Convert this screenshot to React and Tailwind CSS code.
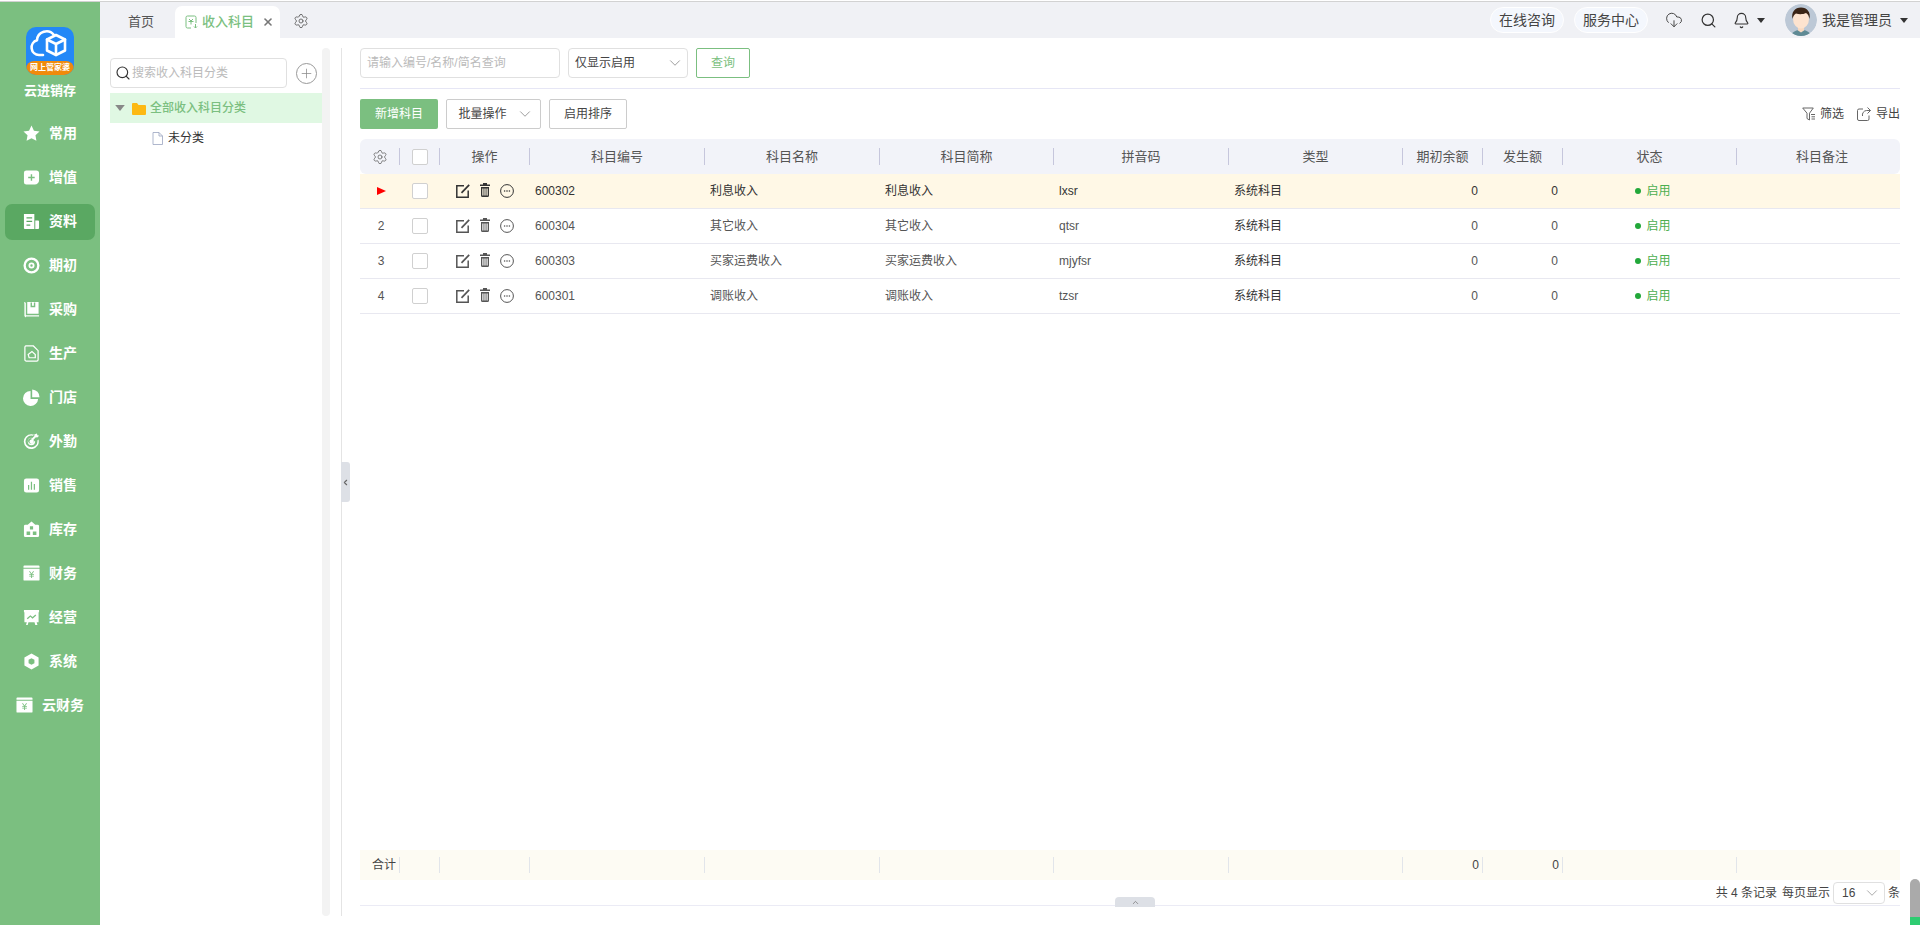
import { Settings, Search, CloudDownload, Bell, ChevronDown, ChevronUp, ChevronLeft, X, Plus } from "lucide-react";

const FONT = "font-['Liberation_Sans','Noto_Sans_CJK_SC',sans-serif]";

const Ico = ({ children, className = "", view = "0 0 18 18" }) => (
  <svg viewBox={view} className={className} fill="currentColor">
    {children}
  </svg>
);

const navIcons = {
  star: (
    <path d="M9 .6l2.600 5.400 5.900.8-4.300 4.100 1 5.900L9 14l-5.200 2.800 1-5.900L.5 6.800l5.900-.8z" />
  ),
  plus: (
    <path
      fillRule="evenodd"
      d="M3.500 1.500H14a3 3 0 0 1 3 3v7.500a4.500 4.500 0 0 1-4.500 4.500H3.500a2.500 2.500 0 0 1-2.500-2.500V4a2.500 2.500 0 0 1 2.500-2.500zM8.200 5.500v2.700H5.500v1.500h2.700v2.700h1.500V9.700h2.700V8.200H9.700V5.500z"
    />
  ),
  doc: (
    <path
      fillRule="evenodd"
      d="M1 1h11v16H2a1 1 0 0 1-1-1zM3.700 4.500v1.300h6V4.500zM3.700 8.300v1.300h6V8.300zM3.700 12.100v1.300h4v-1.300zM13 8h3a1 1 0 0 1 1 1v7a1 1 0 0 1-1 1h-3z"
    />
  ),
  disc: (
    <path
      fillRule="evenodd"
      d="M9 .5a8.500 8.500 0 1 1 0 17 8.500 8.500 0 0 1 0-17zM9 3a6 6 0 1 0 0 12A6 6 0 0 0 9 3zM9 5.800a3.200 3.200 0 1 1 0 6.400 3.200 3.200 0 0 1 0-6.400zM9 7.700a1.300 1.300 0 1 0 0 2.600 1.300 1.300 0 0 0 0-2.600z"
    />
  ),
  book: (
    <g>
      <path d="M1 1l2 .8v13.200h14v1.500H3.200L3 17.500l-1.200-1-.3-.5V3z" />
      <path fillRule="evenodd" d="M4.500 1h12v12.500h-12zM8 1.500v5h5v-5h-1.500v3.500h-2V1.500z" />
    </g>
  ),
  house: (
    <g fill="none" stroke="currentColor" strokeWidth="1.300">
      <path d="M3 1h8l5 5v9.500a1.500 1.500 0 0 1-1.500 1.500h-11A1.500 1.500 0 0 1 2 15.500v-13A1.500 1.500 0 0 1 3 1z" />
      <path d="M5.500 10l4-3 3.500 3v3.500H6.500z" />
    </g>
  ),
  pie: (
    <>
      <path d="M8 2a8 8 0 1 0 8 8.500H8z" />
      <path d="M9.700 .5a8 8 0 0 1 7.800 8.200H9.700z" />
    </>
  ),
  target: (
    <path
      fillRule="evenodd"
      d="M14.800 .5l.4 1.900 1.900.4-2 2-1.500-.2-2.500 2.500a3 3 0 1 1-1.500-1.500l2.500-2.500-.2-1.500zM9 1.200c.9 0 1.800.2 2.600.5l-1 1.100A6.300 6.300 0 1 0 15.200 8l1.200-1a7.900 7.900 0 1 1-7.400-5.800zM9 5.100a3.900 3.900 0 0 0-.1 7.800 3.900 3.900 0 0 0 3.900-3.900c0-.3 0-.5-.1-.8l-1.500 1.300v-.1A2.200 2.200 0 1 1 9 6.800z"
    />
  ),
  bars: (
    <path
      fillRule="evenodd"
      d="M3.500 1.500h11a2.500 2.500 0 0 1 2.500 2.500v10a2.500 2.500 0 0 1-2.500 2.500h-11A2.500 2.500 0 0 1 1 14V4a2.500 2.500 0 0 1 2.500-2.500zM8.300 5v8.500h1.300V5zM5.300 8.500v5h1.300v-5zM11.400 7.500v6h1.300v-6z"
    />
  ),
  store: (
    <path
      fillRule="evenodd"
      d="M9 .5l4 3.500h2.500a1.500 1.500 0 0 1 1.500 1.500v10a1.500 1.500 0 0 1-1.500 1.500h-13A1.500 1.500 0 0 1 1 15.500v-10A1.500 1.500 0 0 1 2.500 4H5zM7.300 5.500v3.600h3.400V5.500zM3.800 11v3.700h3.800V11zM10.400 11v3.700h3.800V11z"
    />
  ),
  yen: (
    <>
      <path d="M.5 1.500a1 1 0 0 1 1-1h15a1 1 0 0 1 1 1V3H.5z" />
      <path
        fillRule="evenodd"
        d="M.5 4h17v11.500a1 1 0 0 1-1 1h-15a1 1 0 0 1-1-1zM6.300 6.500l2.100 3H6.600v.9h2v1h-2v.9h2v1.500h1v-1.500h2v-.9h-2v-1h2v-.9H9.700l2.100-3h-1.100L9 9 7.400 6.500z"
      />
    </>
  ),
  board: (
    <path
      fillRule="evenodd"
      d="M1 1h16v2.500h-.5V14h-2l.8 3H13l-.8-3H5.800L5 17H3.200l.8-3H1.500V3.500H1zM4 9.800l1 1 2.800-2.500 2.300 1.900 3.900-3.400-.9-1-3 2.600-2.300-1.900L4 9.800z"
    />
  ),
  hex: (
    <path
      fillRule="evenodd"
      d="M9 .5l7.500 4.200v8.600L9 17.500l-7.500-4.200V4.700zM9 5.500L5.900 7.200v3.600L9 12.500l3.100-1.700V7.200z"
    />
  ),
};

const navItems = [
  { label: "常用", icon: "star" },
  { label: "增值", icon: "plus" },
  { label: "资料", icon: "doc", active: true },
  { label: "期初", icon: "disc" },
  { label: "采购", icon: "book" },
  { label: "生产", icon: "house" },
  { label: "门店", icon: "pie" },
  { label: "外勤", icon: "target" },
  { label: "销售", icon: "bars" },
  { label: "库存", icon: "store" },
  { label: "财务", icon: "yen" },
  { label: "经营", icon: "board" },
  { label: "系统", icon: "hex" },
  { label: "云财务", icon: "yen" },
];

const Sidebar = () => (
  <div className="w-[100px] shrink-0 bg-[#7bbf80] flex flex-col items-center">
    <div className="mt-[25px] w-[48px] h-[48px] rounded-[10px] bg-[#2388f7] overflow-hidden flex flex-col">
      <svg viewBox="0 0 48 34" className="w-[48px] h-[34px]" fill="none" stroke="#fff" strokeWidth="2.600" strokeLinejoin="round" strokeLinecap="round">
        <path d="M17 28h-4a7.500 7.500 0 0 1-2-14.700A9.500 9.500 0 0 1 28 8" />
        <path d="M30 8l9 4.500v11L30 28l-9-4.500v-11z" />
        <path d="M21 12.500l9 4.500 9-4.500M30 17v11" />
      </svg>
      <div className="h-[14px] bg-[#f08a0c] rounded-t-[8px] flex items-center justify-center text-[8px] leading-none text-white font-bold whitespace-nowrap">
        网上管家婆
      </div>
    </div>
    <div className="mt-[6px] text-[13px] leading-[20px] font-bold text-white">云进销存</div>
    <div className="mt-[14.5px] w-[90px] flex flex-col gap-[8px]">
      {navItems.map((n) => (
        <div
          key={n.label}
          className={`h-[36px] rounded-[7px] flex items-center justify-center gap-[9px] text-white text-[14px] font-bold ${n.active ? "bg-[#5aa862]" : ""}`}
        >
          <Ico className="w-[17px] h-[17px]">{navIcons[n.icon]}</Ico>
          <span>{n.label}</span>
        </div>
      ))}
    </div>
  </div>
);

const Avatar = () => (
  <svg viewBox="0 0 32 32" className="w-[32px] h-[32px] rounded-full">
    <circle cx="16" cy="16" r="16" fill="#bcc8d6" />
    <path d="M6 32c1-5 6-6 10-6s9 1 10 6z" fill="#5f8a94" />
    <path d="M13 22h6v4.500l-3 2-3-2z" fill="#f8d9c0" />
    <ellipse cx="16" cy="15" rx="8" ry="9.500" fill="#fde3cf" />
    <path d="M7.500 15C6 8 10 3.500 16 3.500S26 8 24.500 15c-.5-3-1.500-5-3.500-6-3 1.500-7 1.500-10 .5-2 1-3 3-3.500 5.500z" fill="#3a2416" />
  </svg>
);

const Caret = ({ className = "" }) => (
  <svg viewBox="0 0 8 5" className={`w-[8px] h-[5px] ${className}`} fill="currentColor">
    <path d="M0 0h8L4 5z" />
  </svg>
);

const TabBar = () => (
  <div className="h-[36px] shrink-0 bg-[#f0f1f5] flex items-end text-[13px]">
    <div className="pl-[28px] w-[75px] h-[32px] text-[#555] flex items-center">首页</div>
    <div className="w-[105px] h-[32px] bg-white rounded-t-[7px] flex items-center pl-[10px] text-[#7bbf80] font-medium">
      <svg viewBox="0 0 13 14" className="w-[13px] h-[14px] mr-[4px]" fill="none" stroke="currentColor" strokeWidth="1">
        <path d="M6 13H2.500A1.500 1.500 0 0 1 1 11.500v-9A1.500 1.500 0 0 1 2.500 1h7A1.500 1.500 0 0 1 11 2.500V8" />
        <path d="M4 4l2 2 2-2M3.500 6.500h5M6 6v3.500M10.500 9v4m-1.500-1.500l1.500 1.500 1.500-1.500" />
      </svg>
      <span>收入科目</span>
      <X className="w-[12px] h-[12px] ml-[8px] text-[#777]" strokeWidth={3.200} />
    </div>
    <Settings className="w-[16px] h-[16px] ml-[13px] mb-[9px] text-[#666]" strokeWidth={1.400} />
    <div className="ml-auto h-full flex items-center pr-[12px] text-[#444]">
      <div className="h-[26px] w-[74px] rounded-full bg-[#f4f7fd] border border-white flex items-center justify-center text-[14px]">在线咨询</div>
      <div className="ml-[10px] h-[26px] w-[74px] rounded-full bg-[#f4f7fd] border border-white flex items-center justify-center text-[14px]">服务中心</div>
      <CloudDownload className="ml-[17px] w-[18px] h-[18px] text-[#444]" strokeWidth={1.300} />
      <Search className="ml-[17px] w-[17px] h-[17px] text-[#333]" strokeWidth={1.700} />
      <Bell className="ml-[16px] w-[17px] h-[17px] text-[#333]" strokeWidth={1.600} />
      <Caret className="ml-[7px] text-[#333]" />
      <div className="ml-[20px]"><Avatar /></div>
      <span className="ml-[5px] text-[14px] text-[#444]">我是管理员</span>
      <Caret className="ml-[8px] text-[#333]" />
    </div>
  </div>
);

const TreePanel = () => (
  <div className="w-[222px] shrink-0 pl-[10px] pt-[20px] flex flex-col">
    <div className="flex items-center">
      <div className="w-[177px] shrink-0 h-[30px] border border-[#e0e0e0] rounded-[4px] flex items-center pl-[4px] text-[12px] text-[#bbb]">
        <Search className="w-[16px] h-[16px] text-[#333] mr-[1px]" strokeWidth={1.700} />
        <span>搜索收入科目分类</span>
      </div>
      <div className="ml-[9px] w-[21px] h-[21px] rounded-full border border-[#999] flex items-center justify-center shrink-0">
        <Plus className="w-[15px] h-[15px] text-[#888]" strokeWidth={1.200} />
      </div>
    </div>
    <div className="mt-[5px] h-[30px] bg-[#e0f8e3] flex items-center pl-[5px] text-[12px] text-[#7bbf80] font-medium">
      <Caret className="w-[10px] h-[6px] text-[#888]" />
      <svg viewBox="0 0 14 13" className="w-[14px] h-[13px] ml-[7px] mr-[4px]" fill="#fdb913">
        <path d="M0 2a1 1 0 0 1 1-1h4l1.500 2H13a1 1 0 0 1 1 1v8a1 1 0 0 1-1 1H1a1 1 0 0 1-1-1z" />
      </svg>
      <span>全部收入科目分类</span>
    </div>
    <div className="h-[30px] flex items-center pl-[42px] text-[12px] text-[#333]">
      <svg viewBox="0 0 11 13" className="w-[11px] h-[13px] mr-[5px]" fill="#fff" stroke="#9aa5c0" strokeWidth="0.800">
        <path d="M1 .5h6l3.500 3.500v8.500H1z" />
        <path d="M7 .5V4h3.500" fill="none" />
      </svg>
      <span>未分类</span>
    </div>
  </div>
);

const COLS = "grid grid-cols-[40px_40px_90px_175px_175px_174px_175px_174px_80px_80px_174px_163px]";

const headers = ["", "", "操作", "科目编号", "科目名称", "科目简称", "拼音码", "类型", "期初余额", "发生额", "状态", "科目备注"];

const rows = [
  { no: "600302", name: "利息收入", py: "lxsr" },
  { no: "600304", name: "其它收入", py: "qtsr" },
  { no: "600303", name: "买家运费收入", py: "mjyfsr" },
  { no: "600301", name: "调账收入", py: "tzsr" },
];

const Check = () => (
  <div className="w-[16px] h-[16px] bg-white border border-[#d0d0d0] rounded-[2px]" />
);

const EditIcon = () => (
  <svg viewBox="0 0 14 14" className="w-[14px] h-[14px]" fill="none" stroke="currentColor" strokeWidth="1.500">
    <path d="M8 1.800H.8v11.400h11.400V6.500" />
    <path d="M5.500 8.800L13.200.8" strokeWidth="1.700" />
  </svg>
);

const TrashIcon = () => (
  <svg viewBox="0 0 10 14" className="w-[10px] h-[14px]" fill="currentColor">
    <path d="M3 0h4v1.500h3V3H0V1.500h3z" />
    <path fillRule="evenodd" d="M1 4h8v8.500A1.500 1.500 0 0 1 7.500 14h-5A1.500 1.500 0 0 1 1 12.500zM2.300 5.500v7h1.200v-7zM4.400 5.500v7h1.200v-7zM6.500 5.500v7h1.200v-7z" />
  </svg>
);

const MoreIcon = () => (
  <svg viewBox="0 0 14 14" className="w-[14px] h-[14px]">
    <circle cx="7" cy="7" r="6.400" fill="none" stroke="currentColor" strokeWidth="1" />
    <circle cx="4.600" cy="7" r="0.800" fill="currentColor" />
    <circle cx="7" cy="7" r="0.800" fill="currentColor" />
    <circle cx="9.400" cy="7" r="0.800" fill="currentColor" />
  </svg>
);

const Row = ({ r, i }) => {
  const first = i === 0;
  const txt = first ? "text-[#333]" : "text-[#555]";
  return (
    <div className={`${COLS} h-[35px] border-b-[1.500px] border-[#e8e8f0] text-[12px] items-center ${txt} ${first ? "bg-[#fff8e6]" : ""}`}>
      <div className="flex justify-center pl-[2px]">
        {first ? (
          <svg viewBox="0 0 9 8" className="w-[9px] h-[8px]" fill="#f00"><path d="M0 0l9 4-9 4z" /></svg>
        ) : (
          <span>{i + 1}</span>
        )}
      </div>
      <div className="flex justify-center"><Check /></div>
      <div className={`flex items-center pl-[16px] ${first ? "text-[#333]" : "text-[#555]"}`}>
        <EditIcon />
        <span className="ml-[10px] -mt-[2px]"><TrashIcon /></span>
        <span className="ml-[10px]"><MoreIcon /></span>
      </div>
      <div className="pl-[5px]">{r.no}</div>
      <div className="pl-[5px]">{r.name}</div>
      <div className="pl-[5px]">{r.name}</div>
      <div className="pl-[5px]">{r.py}</div>
      <div className="pl-[5px] text-[#333]">系统科目</div>
      <div className="text-right pr-[5px]">0</div>
      <div className="text-right pr-[5px]">0</div>
      <div className="flex items-center justify-center text-[#4caf50]">
        <span className="ml-[6px] w-[6px] h-[6px] rounded-full bg-[#22a83a] mr-[5px]" />
        <span>启用</span>
      </div>
      <div />
    </div>
  );
};

const ActionBtn = ({ children, w }) => (
  <div className={`${w} h-[30px] border border-[#ccc] rounded-[2px] flex items-center justify-center text-[12px] text-[#444]`}>{children}</div>
);

const Content = () => (
  <div className="flex-1 min-w-0 pl-[18px] pr-[20px] flex flex-col h-[878px]">
    <div className="pt-[10px] h-[51px] border-b-[1.500px] border-[#e6e6f5] flex text-[12px]">
      <div className="w-[200px] h-[30px] border border-[#e0e0e0] rounded-[4px] flex items-center pl-[6px] text-[#bbb]">请输入编号/名称/简名查询</div>
      <div className="ml-[8px] w-[120px] h-[30px] border border-[#e0e0e0] rounded-[4px] flex items-center justify-between pl-[6px] pr-[3px] text-[#444]">
        <span>仅显示启用</span>
        <ChevronDown className="w-[18px] h-[18px] text-[#888]" strokeWidth={1.100} />
      </div>
      <div className="ml-[8px] w-[54px] h-[30px] border border-[#7bbf80] rounded-[2px] flex items-center justify-center text-[#7bbf80]">查询</div>
    </div>
    <div className="mt-[10px] flex items-center">
      <div className="w-[78px] h-[30px] bg-[#7bbf80] rounded-[2px] flex items-center justify-center text-[12px] text-white">新增科目</div>
      <div className="ml-[8px]">
        <ActionBtn w="w-[95px]">
          <span className="ml-[5px]">批量操作</span>
          <ChevronDown className="w-[18px] h-[18px] ml-[9px] text-[#888]" strokeWidth={1.100} />
        </ActionBtn>
      </div>
      <div className="ml-[8px]">
        <ActionBtn w="w-[78px]">启用排序</ActionBtn>
      </div>
      <div className="ml-auto flex items-center text-[12px] text-[#444]">
        <svg viewBox="0 0 14 14" className="w-[14px] h-[14px] mr-[4px]" fill="none" stroke="#666" strokeWidth="1">
          <path d="M.7 1h10.600L7.500 6.200V13L5 11.500V6.200zM9 7.500h4M9.500 9.800h3.500M9.500 12h3.500" />
        </svg>
        <span>筛选</span>
        <svg viewBox="0 0 14 14" className="w-[14px] h-[14px] ml-[13px] mr-[5px]" fill="none" stroke="#666" strokeWidth="1">
          <path d="M6 2H2a1.500 1.500 0 0 0-1.500 1.500v8.500A1.500 1.500 0 0 0 2 13.500h8.500A1.500 1.500 0 0 0 12 12V8.500" />
          <path d="M13.500 3.500H9.500A4.500 4.500 0 0 0 5.500 9M10.500.5l3 3-3 3" />
        </svg>
        <span>导出</span>
      </div>
    </div>
    <div className="mt-[10px] flex-1 flex flex-col min-h-0">
      <div className={`${COLS} h-[35px] shrink-0 bg-[#f2f3f9] rounded-[6px] text-[13px] text-[#555] items-center`}>
        {headers.map((h, i) => (
          <div key={i} className={`h-[17px] flex items-center justify-center ${i < 11 ? "border-r border-[#c6c6dc]" : "pl-[7px]"}`}>
            {i === 0 && <Settings className="w-[16px] h-[16px] text-[#666]" strokeWidth={1.200} />}
            {i === 1 && <Check />}
            {h}
          </div>
        ))}
      </div>
      {rows.map((r, i) => (
        <Row key={r.no} r={r} i={i} />
      ))}
      <div className="flex-1" />
      <div className={`${COLS} h-[30px] shrink-0 bg-[#fdfbf3] text-[12px] text-[#444] items-center`}>
        {headers.map((_, i) => (
          <div key={i} className={`h-[16px] flex items-center justify-end pr-[3px] ${i < 11 ? "border-r border-[#e2e5ea]" : ""}`}>
            {i === 0 ? "合计" : i === 8 || i === 9 ? "0" : ""}
          </div>
        ))}
      </div>
      <div className="h-[26px] shrink-0 border-b-[1.500px] border-[#ebebf5] flex items-center justify-end text-[12px] text-[#444]">
        <span>共 4 条记录</span>
        <span className="ml-[5px]">每页显示</span>
        <div className="ml-[3px] w-[52px] h-[22px] border border-[#e0e0e0] rounded-[4px] flex items-center justify-between pl-[8px] pr-[3px]">
          <span>16</span>
          <ChevronDown className="w-[18px] h-[18px] text-[#999]" strokeWidth={1.100} />
        </div>
        <span className="ml-[3px]">条</span>
      </div>
      <div className="h-[10px] shrink-0" />
    </div>
  </div>
);

export default function App() {
  return (
    <div className={`relative w-[1920px] h-[925px] overflow-hidden bg-white flex flex-col ${FONT}`}>
      <div className="h-[2px] shrink-0 border-t border-white bg-[#d2d2d2]" />
      <div className="flex-1 min-h-0 flex">
        <Sidebar />
        <div className="flex-1 min-w-0 flex flex-col">
          <TabBar />
          <div className="flex-1 min-h-0 flex">
            <TreePanel />
            <div className="mt-[10px] mb-[9px] w-[8px] shrink-0 rounded-[4px] bg-[#f3f3f3]" />
            <div className="ml-[11px] mt-[10px] mb-[9px] w-px shrink-0 bg-[#e4e4e4]" />
            <Content />
          </div>
        </div>
      </div>
      {/* collapse handles and page scrollbar sit on top of the panels */}
      <div className="absolute left-[341px] top-[462px] w-[9px] h-[40px] bg-[#dde0e6] rounded-r-[3px] flex items-center justify-center">
        <ChevronLeft className="w-[9px] h-[9px] text-[#666]" strokeWidth={3} />
      </div>
      <div className="absolute left-[1115px] top-[897px] w-[40px] h-[10px] bg-[#dde0e6] rounded-t-[4px] flex items-center justify-center">
        <ChevronUp className="w-[9px] h-[9px] text-[#777]" strokeWidth={2} />
      </div>
      <div className="absolute right-0 top-[879px] w-[10px] h-[46px] rounded-t-[5px] bg-[#aaaaaa] overflow-hidden flex flex-col justify-end">
        <div className="h-[8px] bg-[#2ecc71]" />
      </div>
    </div>
  );
}
